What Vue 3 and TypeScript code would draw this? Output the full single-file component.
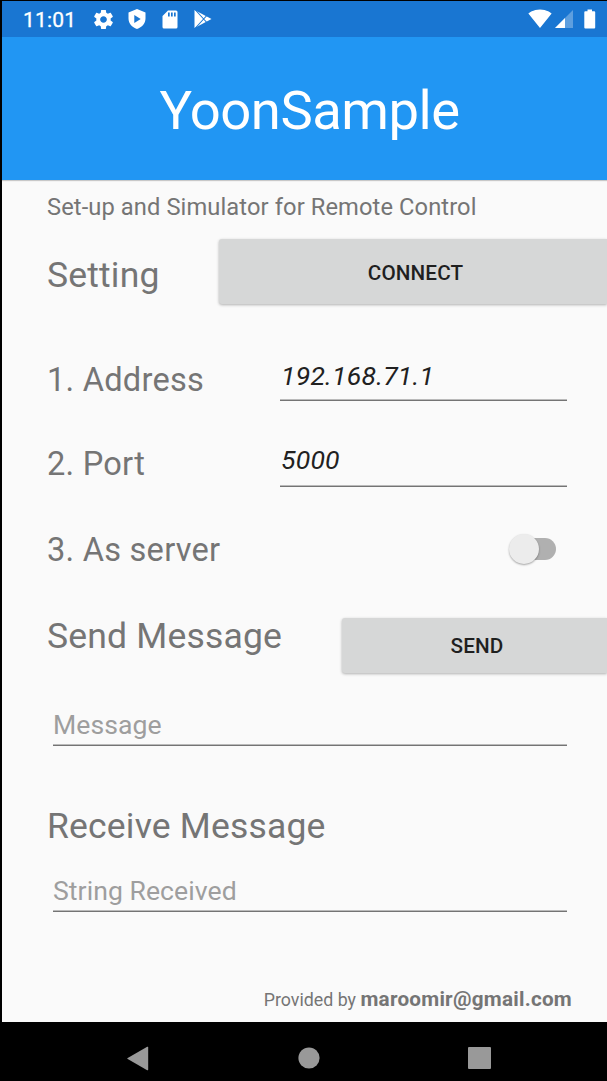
<script setup lang="ts">
import { ref } from 'vue'

const address = ref<string>('192.168.71.1')
const port = ref<string>('5000')
const asServer = ref<boolean>(false)
const message = ref<string>('')
const received = ref<string>('')
</script>

<template>
  <div class="device">
    <div class="status-bar">
      <span class="clock">11:01</span>
      <svg class="icon gear" viewBox="0 0 24 24">
        <path d="M19.43 12.98c.04-.32.07-.64.07-.98s-.03-.66-.07-.98l2.11-1.65c.19-.15.24-.42.12-.64l-2-3.46c-.12-.22-.39-.3-.61-.22l-2.49 1c-.52-.4-1.08-.73-1.69-.98l-.38-2.65C14.46 2.18 14.25 2 14 2h-4c-.25 0-.46.18-.49.42l-.38 2.65c-.61.25-1.17.59-1.69.98l-2.49-1c-.23-.09-.49 0-.61.22l-2 3.46c-.13.22-.07.49.12.64l2.11 1.65c-.04.32-.07.65-.07.98s.03.66.07.98l-2.11 1.65c-.19.15-.24.42-.12.64l2 3.46c.12.22.39.3.61.22l2.49-1c.52.4 1.08.73 1.69.98l.38 2.65c.03.24.24.42.49.42h4c.25 0 .46-.18.49-.42l.38-2.65c.61-.25 1.17-.59 1.69-.98l2.49 1c.23.09.49 0 .61-.22l2-3.46c.12-.22.07-.49-.12-.64l-2.11-1.65zM12 15.5c-1.93 0-3.5-1.57-3.5-3.5s1.57-3.5 3.5-3.5 3.5 1.57 3.5 3.5-1.57 3.5-3.5 3.5z" />
      </svg>
      <svg class="icon shield" viewBox="0 0 18 20">
        <path fill-rule="evenodd" d="M9 0L.5 3.4v6.2C.5 14.4 4 18.600 9 20c5-1.400 8.500-5.600 8.500-10.400V3.400zM6.300 6v8l6.400-4z" />
      </svg>
      <svg class="icon sd" viewBox="0 0 16 19">
        <path fill-rule="evenodd" d="M6 .5h8Q15.500 .5 15.500 2v15q0 1.500-1.500 1.500H2Q.5 18.500 .5 17V6zM6 2.500v4h1.700v-4zM9 2.500v4h1.700v-4zM12 2.500v4h1.700v-4z" />
      </svg>
      <svg class="icon play" viewBox="0 0 18 20">
        <path d="M.5 1L17.500 10 .5 19z" />
        <path class="cut" d="M1 .5L12.800 13.500M1 19.500L12.800 6.500" />
      </svg>
      <span class="spacer"></span>
      <svg class="icon wifi" viewBox="0 0 24 20">
        <path d="M12.010 19L23.640 4.500c-.45-.34-4.930-4-11.640-4C5.280.5.810 4.160.360 4.500z" />
      </svg>
      <svg class="icon signal" viewBox="0 0 18 18">
        <path class="faded" d="M0 18L18 0v18z" />
        <path d="M0 18L10 8v10z" />
      </svg>
      <svg class="icon battery" viewBox="0 0 12 20">
        <path d="M3.500 .5h4.500v1.800h2.200q1 0 1 1v15.200q0 1-1 1H1.300q-1 0-1-1V3.300q0-1 1-1h2.200z" />
      </svg>
    </div>

    <header class="app-header">
      <h1>YoonSample</h1>
    </header>

    <main class="content">
      <p class="subtitle">Set-up and Simulator for Remote Control</p>

      <section class="row setting-row">
        <h2 class="heading">Setting</h2>
        <button class="btn btn-connect" type="button">CONNECT</button>
      </section>

      <label class="row address-row">
        <span class="label">1. Address</span>
        <input v-model="address" class="field value" type="text" />
      </label>

      <label class="row port-row">
        <span class="label">2. Port</span>
        <input v-model="port" class="field value" type="text" />
      </label>

      <div class="row server-row">
        <span class="label">3. As server</span>
        <button
          class="switch"
          :class="{ on: asServer }"
          type="button"
          role="switch"
          :aria-checked="asServer"
          @click="asServer = !asServer"
        >
          <span class="thumb"></span>
        </button>
      </div>

      <section class="row send-row">
        <h2 class="heading">Send Message</h2>
        <button class="btn btn-send" type="button">SEND</button>
      </section>
      <input v-model="message" class="field wide message" type="text" placeholder="Message" />

      <h2 class="heading receive">Receive Message</h2>
      <input v-model="received" class="field wide received" type="text" placeholder="String Received" />

      <footer class="credit">Provided by <strong>maroomir@gmail.com</strong></footer>
    </main>

    <nav class="nav-bar">
      <svg class="back" viewBox="0 0 22 25"><path d="M20.200 .8q1 -.5 1 .6v22.200q0 1.100-1 .6L.7 13.100q-.9-.6 0-1.200z" /></svg>
      <svg class="home" viewBox="0 0 22 22"><circle cx="11" cy="11" r="10.600" /></svg>
      <span class="recent"></span>
    </nav>
  </div>
</template>

<style>
body {
  margin: 0;
  background: #000;
}
</style>

<style scoped>
.device {
  box-sizing: border-box;
  display: flex;
  flex-direction: column;
  width: 607px;
  height: 1081px;
  padding: 1px 0 0 2px;
  overflow: hidden;
  background: #000;
  color: #757575;
  font-family: Roboto, "Liberation Sans", sans-serif;
}

.status-bar {
  display: flex;
  align-items: center;
  flex: none;
  box-sizing: border-box;
  height: 36px;
  padding: 0 11px 0 21px;
  background: #1976d2;
  color: #fff;
}

.clock {
  width: 70px;
  font-size: 21px;
  line-height: 36px;
  padding-top: 1px;
  letter-spacing: 0.2px;
  -webkit-text-stroke: 0.3px #fff;
}

.icon {
  flex: none;
  fill: #fff;
}

.gear { width: 23px; height: 23px; margin-left: -1px; }
.shield { width: 18px; height: 20px; margin-left: 12.5px; }
.sd { width: 16px; height: 19px; margin-left: 16px; }
.play { width: 18px; height: 20px; margin-left: 16.5px; }
.play .cut { fill: none; stroke: #1976d2; stroke-width: 1.1; }
.spacer { flex: 1; }
.wifi { width: 24px; height: 20px; }
.signal { width: 18px; height: 18px; margin: 0 0 0 3px; }
.signal .faded { opacity: 0.3; }
.battery { width: 12px; height: 20px; margin-left: 11px; }

.app-header {
  position: relative;
  z-index: 1;
  flex: none;
  height: 143px;
  background: #2196f3;
  box-shadow: 0 1px 1px rgba(0, 0, 0, 0.2);
  text-align: center;
}

.app-header h1 {
  margin: 0;
  padding-top: 2px;
  padding-left: 10px;
  color: #fff;
  font-size: 54.4px;
  font-weight: 400;
  line-height: 144px;
  letter-spacing: -0.5px;
}

.content {
  display: flex;
  flex-direction: column;
  flex: none;
  box-sizing: border-box;
  height: 842px;
  padding-left: 45px;
  background: #fafafa;
}

.subtitle {
  height: 58px;
  margin: 0;
  font-size: 23.7px;
  line-height: 54px;
  letter-spacing: 0.1px;
}

.row {
  display: flex;
  align-items: center;
  justify-content: space-between;
  flex: none;
}

.heading {
  margin: 0;
  font-size: 35.5px;
  font-weight: 400;
  line-height: 48px;
  letter-spacing: 0.18px;
}

.label {
  font-size: 32.6px;
  line-height: 44px;
  letter-spacing: 0.24px;
}

.btn {
  box-sizing: border-box;
  margin: 0;
  padding: 0;
  border: 0;
  border-radius: 3px 0 0 3px;
  background: #d6d7d7;
  box-shadow: 0 1px 3px rgba(0, 0, 0, 0.3);
  color: #1f1f1f;
  font-family: inherit;
  font-size: 20.7px;
  font-weight: 500;
}

.setting-row { height: 66px; }
.setting-row .heading { margin-top: 8px; }
.btn-connect { width: 388px; height: 65px; padding: 2px 0 0 5px; margin-top: 1px; letter-spacing: 0.1px; }

.address-row { height: 86px; margin-top: 33px; padding-right: 40px; }
.port-row { height: 82px; padding-right: 40px; }
.server-row { height: 90px; padding-right: 51.5px; }

.field {
  box-sizing: border-box;
  margin: 0;
  padding: 0 0 2px;
  border: 0;
  border-radius: 0;
  outline: 0;
  background: linear-gradient(#bababa 50%, #747474 50%) bottom / 100% 2px no-repeat;
  color: #212121;
  font-family: inherit;
  font-size: 26.6px;
  letter-spacing: 0.05px;
}

.field::placeholder {
  color: #9e9e9e;
  opacity: 1;
}

.value {
  width: 287px;
  padding-left: 1px;
  font-style: italic;
  letter-spacing: 0.2px;
}

.address-row .value { height: 50px; margin-bottom: 8px; }
.port-row .value { height: 53px; margin-bottom: 7px; }

.switch {
  display: flex;
  align-items: center;
  width: 46px;
  height: 22px;
  margin: 0 0 2px;
  padding: 0;
  border: 0;
  border-radius: 11px;
  background: linear-gradient(#b0b0b0, #b0b0b0) right / 32px 22px no-repeat;
}

.thumb {
  flex: none;
  width: 30px;
  height: 30px;
  margin-left: -1px;
  border-radius: 50%;
  background: #ececec;
  box-shadow: 0 1px 2px rgba(0, 0, 0, 0.35);
}

.switch.on { background-color: #80cbc4; }
.switch.on .thumb { margin-left: 16px; background: #009688; }

.send-row { height: 56px; margin-top: 23px; }
.send-row .heading { margin-bottom: 21px; }
.btn-send { width: 265px; height: 55px; margin-bottom: 1px; padding: 0 0 0 5px; letter-spacing: 0.1px; }

.wide {
  flex: none;
  width: 514px;
  height: 42px;
  margin-left: 6px;
}

.message { margin-top: 30px; }
.receive { margin-top: 50px; line-height: 60px; }
.received { margin-top: 14px; }

.credit {
  margin-top: auto;
  padding: 0 35px 8px 0;
  font-size: 17.8px;
  line-height: 28px;
  text-align: right;
}

.credit strong {
  font-size: 20.7px;
  font-weight: 700;
  letter-spacing: 0.24px;
}

.nav-bar {
  display: flex;
  align-items: center;
  flex: none;
  height: 59px;
  padding: 13px 116.5px 0 125px;
  box-sizing: border-box;
  justify-content: space-between;
}

.back { width: 22px; height: 25px; fill: #999; }
.home { width: 22px; height: 22px; fill: #999; }
.recent { width: 22.500px; height: 22.500px; border-radius: 1px; background: #999; }
</style>
